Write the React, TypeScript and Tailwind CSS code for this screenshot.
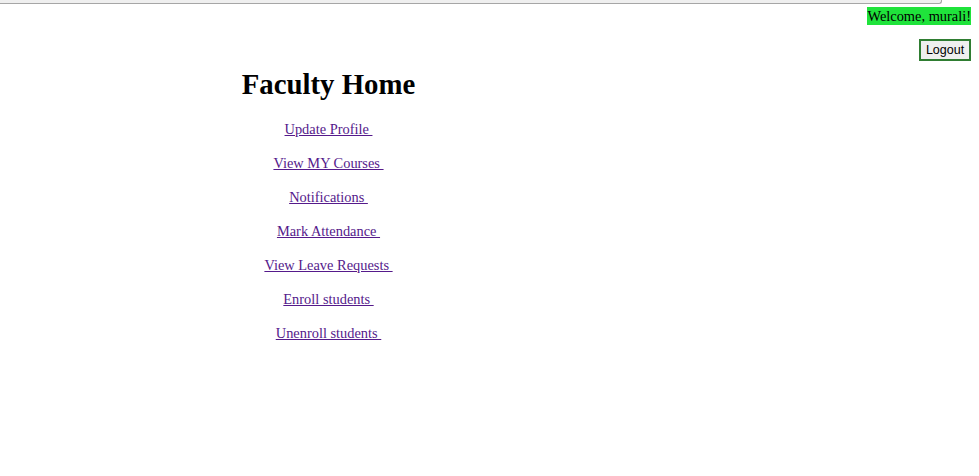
import React from "react";

const links = [
  "Update Profile",
  "View MY Courses",
  "Notifications",
  "Mark Attendance",
  "View Leave Requests",
  "Enroll students",
  "Unenroll students",
];

export default function App() {
  return (
    <div className="relative w-full h-[476px] bg-white font-['Liberation_Serif',serif] overflow-hidden">
      {/* leftover edge of the element scrolled above */}
      <div className="h-[4px] w-[942px] bg-[#efefef] border-b border-r border-[#a6a6a6] rounded-br-[3px]" />

      {/* Header: welcome + logout */}
      <div className="flex flex-col items-end pr-[8px]">
        <span className="mt-[3px] bg-[#1fe33b] text-black text-[14.4px] leading-[18px]">
          Welcome, murali!
        </span>
        <button className="mt-[14px] h-[22px] w-[52px] border-2 border-[#2f7d32] bg-[#efefef] text-black text-[12.5px] font-['Liberation_Sans',sans-serif] leading-none">
          Logout
        </button>
      </div>

      {/* Main */}
      <div className="ml-[8px] w-[641px] flex flex-col items-center">
        <h1 className="mt-[7px] text-[28.8px] leading-[33px] font-bold text-black">
          Faculty Home
        </h1>
        <div className="mt-[19px] flex flex-col items-center gap-[16px]">
          {links.map((l) => (
            <a
              key={l}
              href="#"
              className="text-[14.4px] leading-[18px] text-[#551a8b] underline"
            >
              {l + "\u00a0"}
            </a>
          ))}
        </div>
      </div>
    </div>
  );
}
